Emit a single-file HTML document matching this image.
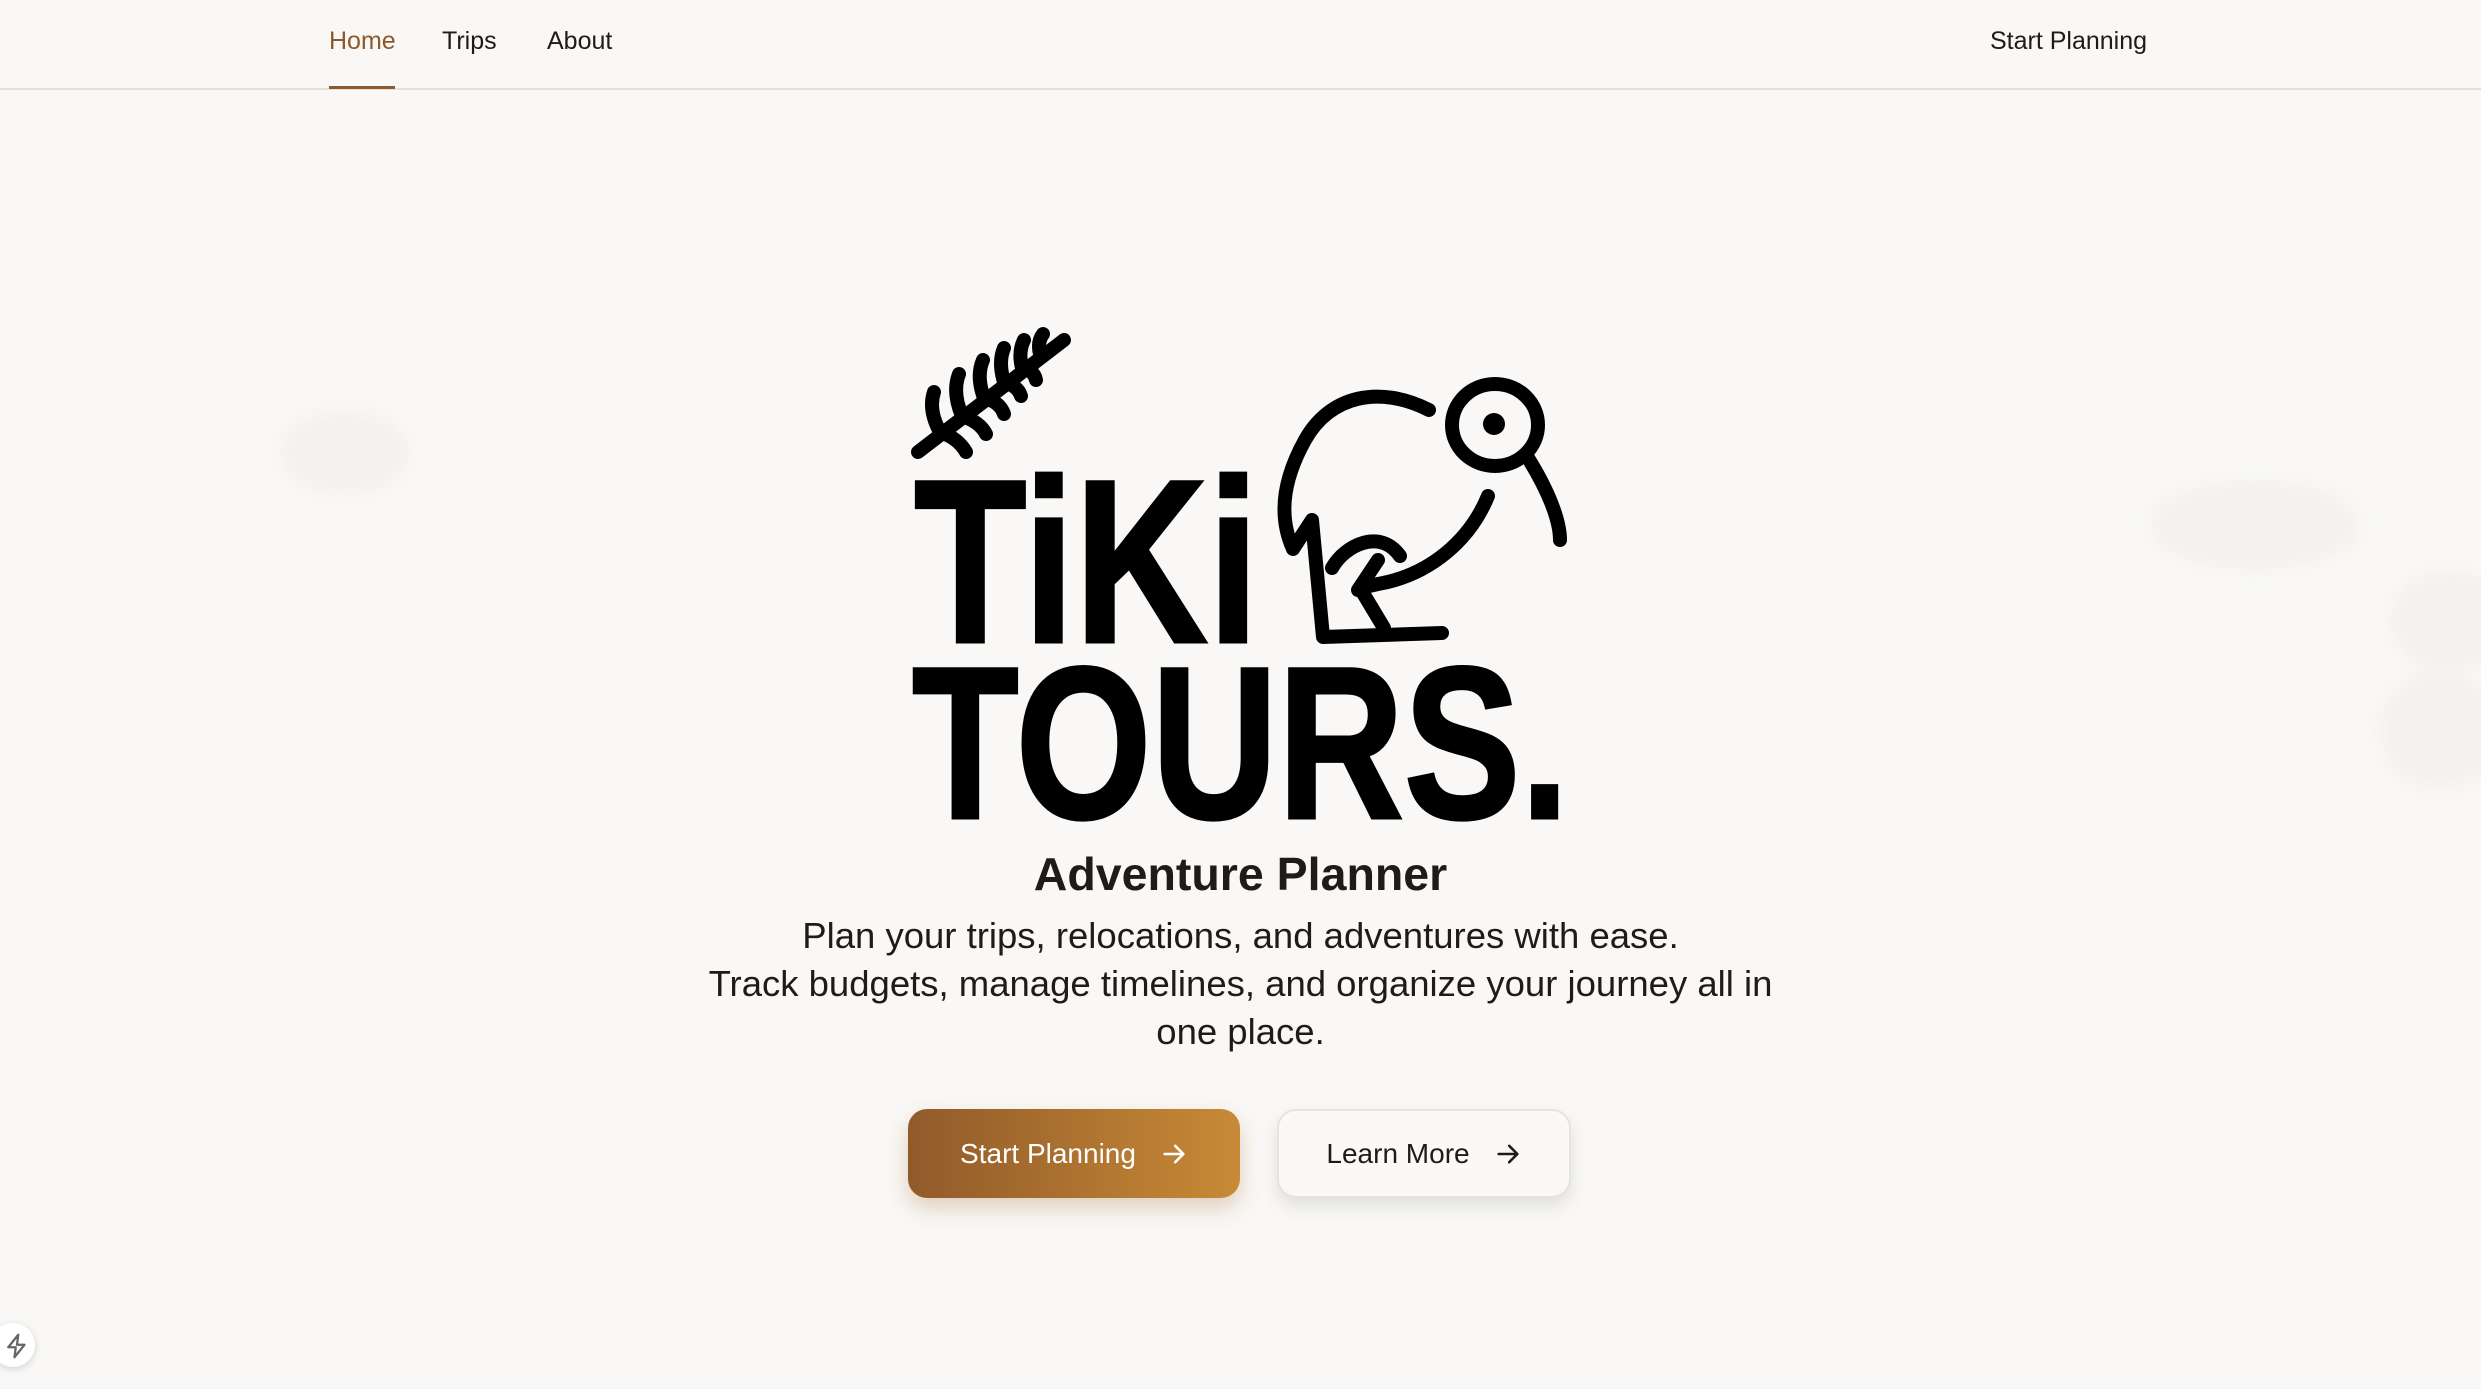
<!DOCTYPE html>
<html><head><meta charset="utf-8"><style>
html,body{margin:0;padding:0;width:2481px;height:1389px;overflow:hidden;background:#f9f8f6;font-family:"Liberation Sans",sans-serif;color:#1e1b18}
.nav{position:absolute;left:0;top:0;width:2481px;height:88px;border-bottom:2px solid #e4e1dc}
.nav a{position:absolute;top:27px;font-size:25px;color:#1e1b18;text-decoration:none}
.ul{position:absolute;left:329px;top:86px;width:66px;height:3px;background:#8f582a}
.h2{position:absolute;left:0;width:2481px;text-align:center;top:847px;font-size:46.5px;font-weight:bold;color:#1e1b18}
.p{position:absolute;left:0;width:2481px;text-align:center;font-size:36.5px;color:#1e1b18;white-space:nowrap}
.btn{position:absolute;top:1109px;height:89px;border-radius:19px;box-sizing:border-box;font-size:28px;display:flex;align-items:center;justify-content:center}
.btn svg{margin-left:24px}
.b1{left:908px;width:332px;background:linear-gradient(90deg,#915a2a,#c88a36);color:#fff;box-shadow:0 10px 22px rgba(160,100,40,.28)}
.b2{left:1277px;width:294px;background:#faf9f7;border:2px solid #e6e3de;color:#1e1b18;box-shadow:0 8px 18px rgba(0,0,0,.10)}
.cloud{position:absolute;background:#efede9;border-radius:50%;filter:blur(8px);opacity:.55}
</style></head><body>
<div class="cloud" style="left:280px;top:410px;width:130px;height:85px"></div>
<div class="cloud" style="left:2150px;top:480px;width:210px;height:90px"></div>
<div class="cloud" style="left:2390px;top:570px;width:120px;height:100px"></div>
<div class="cloud" style="left:2380px;top:670px;width:120px;height:120px"></div>
<div class="nav">
<a style="left:329px;color:#8f582a">Home</a>
<a style="left:442px">Trips</a>
<a style="left:547px">About</a>
<a style="left:1990px">Start Planning</a>
<div class="ul"></div>
</div>
<svg width="2481" height="1389" style="position:absolute;left:0;top:0">
<text x="914" y="642" font-family="Liberation Sans" font-weight="bold" font-size="233" textLength="345" lengthAdjust="spacingAndGlyphs" fill="#000" stroke="#000" stroke-width="3">TiKi</text>
<text x="912" y="818" font-family="Liberation Sans" font-weight="bold" font-size="217" textLength="657" lengthAdjust="spacingAndGlyphs" fill="#000" stroke="#000" stroke-width="3">TOURS.</text>
<g stroke="#000" stroke-width="14" fill="none" stroke-linecap="round" stroke-linejoin="round">
<path d="M918 452 L1064 340"/>
<path d="M940 432 q-12 -22 -6 -40 M962 416 q-10 -24 -3 -42 M984 398 q-8 -22 -1 -38 M1004 382 q-6 -20 0 -34 M1022 368 q-4 -16 2 -28 M1040 354 q-3 -12 3 -20"/>
<path d="M940 432 q18 6 26 20 M962 416 q18 6 24 18 M984 398 q16 4 20 16 M1004 382 q14 4 17 14 M1022 368 q12 2 14 12"/>
<path d="M1429 410 C1380 385 1330 395 1305 440 C1280 485 1280 520 1293 549 L1312 520 L1323 637 L1442 633"/>
<ellipse cx="1495" cy="425" rx="43" ry="41"/>
<path d="M1528 458 C1548 490 1560 520 1560 540"/>
<path d="M1488 496 C1470 540 1430 575 1378 584 L1360 588 L1384 628"/>
<path d="M1332 568 C1345 545 1380 528 1400 556"/>
<path d="M1378 560 L1358 590"/>
</g>
<circle cx="1494" cy="424" r="11" fill="#000"/>
</svg>
<div class="h2">Adventure Planner</div>
<div class="p" style="top:915px">Plan your trips, relocations, and adventures with ease.</div>
<div class="p" style="top:963px">Track budgets, manage timelines, and organize your journey all in</div>
<div class="p" style="top:1011px">one place.</div>
<div class="btn b1">Start Planning<svg width="28" height="28" viewBox="0 0 24 24"><path d="M4 12H20M13 5l7 7-7 7" fill="none" stroke="#fff" stroke-width="2.2" stroke-linecap="round" stroke-linejoin="round"/></svg></div>
<div class="btn b2">Learn More<svg width="28" height="28" viewBox="0 0 24 24"><path d="M4 12H20M13 5l7 7-7 7" fill="none" stroke="#1e1b18" stroke-width="2.2" stroke-linecap="round" stroke-linejoin="round"/></svg></div>
<div style="position:absolute;left:-9px;top:1323px;width:44px;height:44px;border-radius:50%;background:#fff;box-shadow:0 2px 8px rgba(0,0,0,.15)"></div>
<svg width="30" height="30" style="position:absolute;left:2px;top:1331px" viewBox="0 0 24 24"><path d="M13 3 L5 13 H11 L10 21 L18 11 H12 Z" fill="none" stroke="#666" stroke-width="1.8" stroke-linejoin="round"/></svg>
</body></html>
